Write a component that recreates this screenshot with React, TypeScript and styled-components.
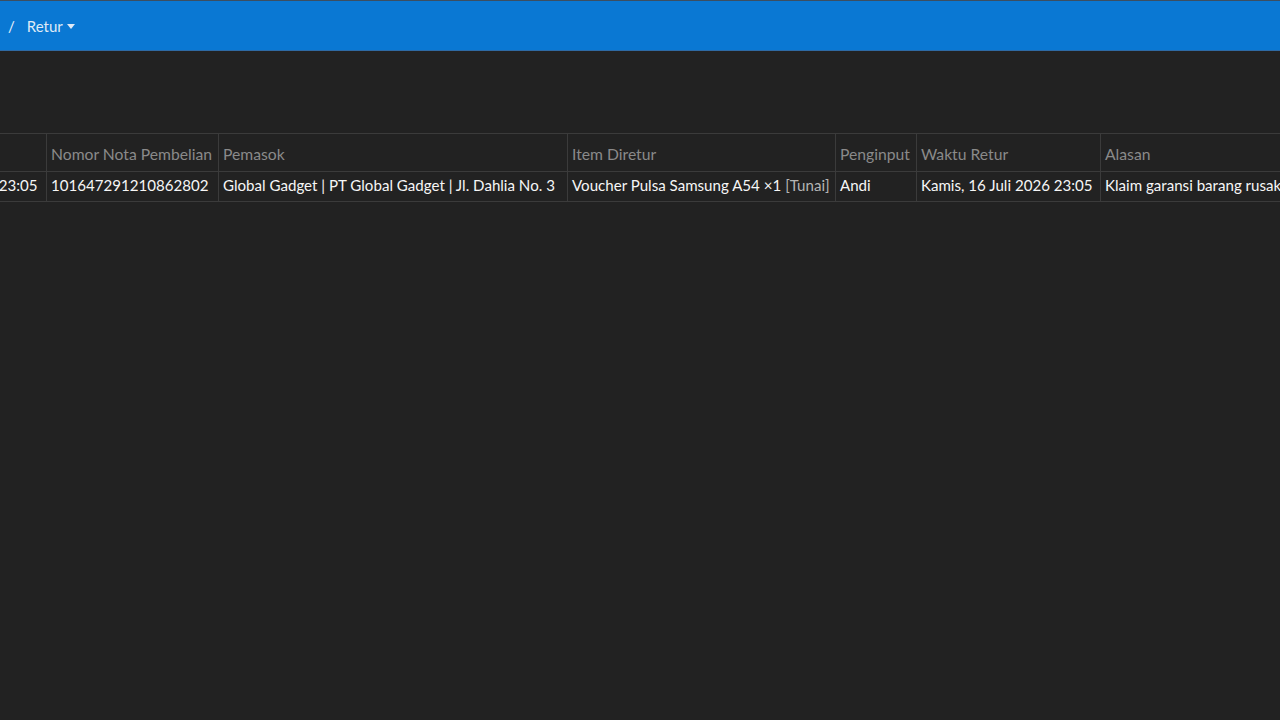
import styled, { createGlobalStyle } from "styled-components";

const GlobalStyle = createGlobalStyle`
  html, body {
    margin: 0;
    padding: 0;
    background: #222222;
    overflow: hidden;
  }

  body {
    font-family: Lato, "Open Sans", sans-serif;
    font-size: 15px;
    color: #f2f2f2;
  }
`;

const Page = styled.div`
  width: 1280px;
  height: 720px;
  display: flex;
  flex-direction: column;
  background: #222222;
  overflow: hidden;
`;

const TopBar = styled.header`
  height: 49px;
  border-top: 1px solid #3c4e60;
  border-bottom: 1px solid #2f6aa3;
  background: #0a78d3;
  display: flex;
  align-items: center;
  padding: 0 8px;
  color: #dfeaf6;
`;

const Crumbs = styled.nav`
  display: flex;
  align-items: center;
  gap: 12px;
  font-size: 15px;
`;

const Separator = styled.span`
  color: #e8f1fa;
`;

const CrumbMenu = styled.button`
  display: flex;
  align-items: center;
  gap: 4px;
  border: 0;
  padding: 0;
  background: none;
  font: inherit;
  color: #dfeaf6;
  cursor: pointer;
`;

const Caret = styled.span`
  width: 0;
  height: 0;
  margin-top: 2px;
  border-left: 4.5px solid transparent;
  border-right: 4.5px solid transparent;
  border-top: 5px solid #dfeaf6;
`;

const TableScroll = styled.div`
  margin-top: 82px;
  overflow: hidden;
`;

const Table = styled.table<{ $w: number }>`
  width: ${(p) => p.$w}px;
  margin-left: -139px;
  border-collapse: collapse;
  table-layout: fixed;
  white-space: nowrap;
`;

const HeadCell = styled.th`
  height: 38px;
  box-sizing: border-box;
  padding: 4px 4px 8px 4px;
  border: 1px solid #3b3b3b;
  text-align: left;
  vertical-align: bottom;
  font-size: 15.7px;
  font-weight: 400;
  color: #8a8a8a;
`;

const Cell = styled.td`
  height: 30px;
  box-sizing: border-box;
  padding: 1px 4px 5px 4px;
  border: 1px solid #3b3b3b;
  font-size: 15.1px;
  color: #f6f6f6;
  overflow: hidden;
`;

const Muted = styled.span`
  color: #b4b4b4;
`;

const columns = [
  { label: "Waktu Pembelian", w: 185 },
  { label: "Nomor Nota Pembelian", w: 172 },
  { label: "Pemasok", w: 349 },
  { label: "Item Diretur", w: 268 },
  { label: "Penginput", w: 81 },
  { label: "Waktu Retur", w: 184 },
  { label: "Alasan", w: 260 },
];

const tableWidth = columns.reduce((sum, c) => sum + c.w, 0);

export default function App() {
  return (
    <Page>
      <GlobalStyle />
      <TopBar>
        <Crumbs>
          <Separator>/</Separator>
          <CrumbMenu>
            Retur
            <Caret />
          </CrumbMenu>
        </Crumbs>
      </TopBar>
      <TableScroll>
        <Table $w={tableWidth}>
          <colgroup>
            {columns.map((c) => (
              <col key={c.label} style={{ width: c.w }} />
            ))}
          </colgroup>
          <thead>
            <tr>
              {columns.map((c) => (
                <HeadCell key={c.label}>{c.label}</HeadCell>
              ))}
            </tr>
          </thead>
          <tbody>
            <tr>
              <Cell>Kamis, 16 Juli 2026 23:05</Cell>
              <Cell>101647291210862802</Cell>
              <Cell>Global Gadget | PT Global Gadget | Jl. Dahlia No. 3</Cell>
              <Cell>
                Voucher Pulsa Samsung A54 ×1 <Muted>[Tunai]</Muted>
              </Cell>
              <Cell>Andi</Cell>
              <Cell>Kamis, 16 Juli 2026 23:05</Cell>
              <Cell>Klaim garansi barang rusak</Cell>
            </tr>
          </tbody>
        </Table>
      </TableScroll>
    </Page>
  );
}
